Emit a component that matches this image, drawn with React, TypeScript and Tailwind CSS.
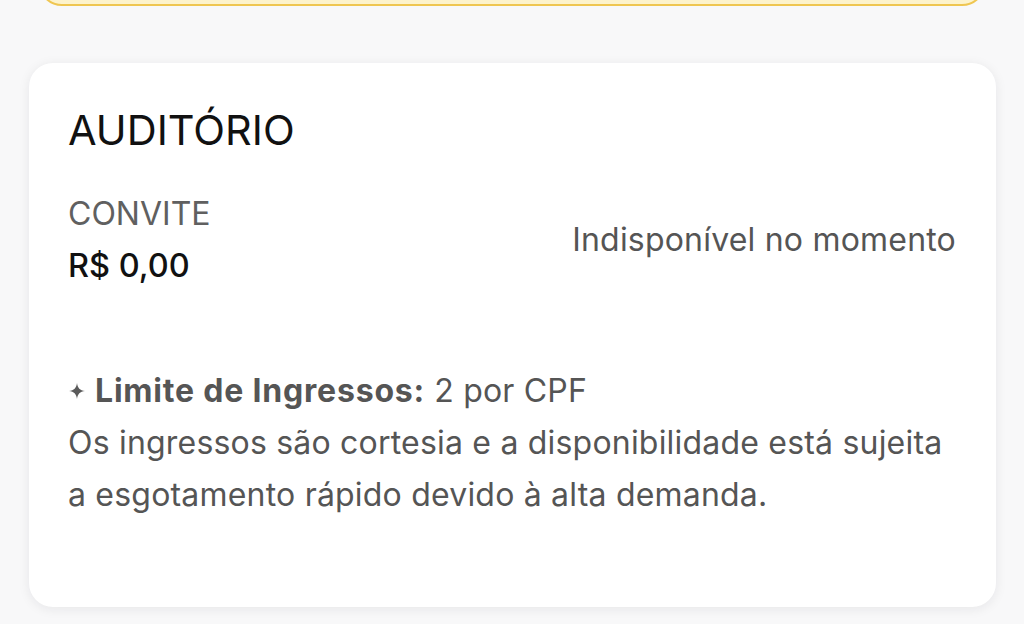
import React from "react";

const font = { fontFamily: "Inter, 'Noto Sans', 'Liberation Sans', sans-serif" };

function Sparkle() {
  return (
    <svg width="16" height="16" viewBox="0 0 16 16" className="mr-[10px] ml-[1px] inline-block shrink-0">
      <path d="M8 0 C8.6 5 11 7.4 16 8 C11 8.6 8.6 11 8 16 C7.4 11 5 8.6 0 8 C5 7.4 7.4 5 8 0 Z" fill="#5b5b5b" />
    </svg>
  );
}

export default function App() {
  return (
    <div className="min-h-screen overflow-hidden bg-[#f8f8f9]" style={font}>
      {/* previous section, mostly scrolled off */}
      <div className="mx-[38px] -mt-[54px] h-[60px] rounded-[24px] border-2 border-[#efc651] bg-[#fdf3cc]" />

      <div className="mx-[28px] ml-[29px] mt-[57px] rounded-[24px] bg-white px-[39px] pb-[86px] pt-[43px] shadow-[0_2px_12px_rgba(20,20,40,0.08)]">
        <h2 className="text-[41.5px] leading-[48px] font-normal text-[#111]">AUDITÓRIO</h2>

        <div className="mt-[40px] flex items-center justify-between">
          <div>
            <div className="text-[32px] leading-[40px] text-[#606060]">CONVITE</div>
            <div className="mt-[12px] text-[32.5px] leading-[40px] font-medium text-[#111]">R$ 0,00</div>
          </div>
          <div className="pr-[1px] text-[32px] leading-[40px] tracking-[0.2px] text-[#555]">Indisponível no momento</div>
        </div>

        <div className="mt-[79px] text-[32px] leading-[52px] tracking-[0.2px] text-[#555]">
          <p className="flex items-center">
            <Sparkle />
            <span>
              <span className="font-bold tracking-[0.8px]">Limite de Ingressos:</span> 2 por CPF
            </span>
          </p>
          <p>
            Os ingressos são cortesia e a disponibilidade está sujeita a esgotamento rápido devido à alta demanda.
          </p>
        </div>
      </div>
    </div>
  );
}
